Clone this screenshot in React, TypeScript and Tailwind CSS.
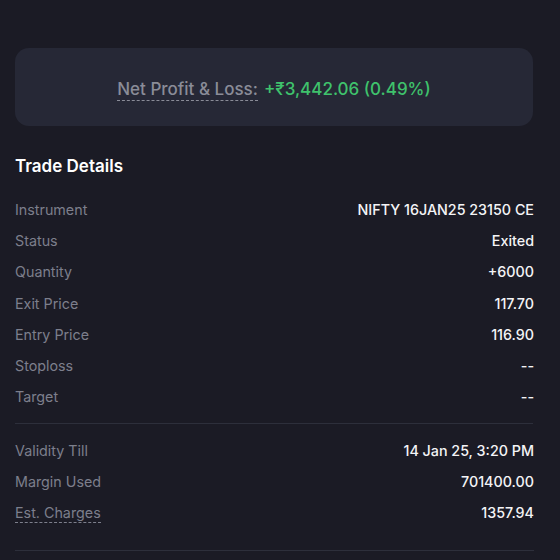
const rowsTop = [
  { label: "Instrument", value: "NIFTY 16JAN25 23150 CE" },
  { label: "Status", value: "Exited" },
  { label: "Quantity", value: "+6000" },
  { label: "Exit Price", value: "117.70" },
  { label: "Entry Price", value: "116.90" },
  { label: "Stoploss", value: "--" },
  { label: "Target", value: "--" },
];

const rowsBottom = [
  { label: "Validity Till", value: "14 Jan 25, 3:20 PM" },
  { label: "Margin Used", value: "701400.00" },
  { label: "Est. Charges", value: "1357.94", dashed: true },
];

type Row = { label: string; value: string; dashed?: boolean };

function DetailRow({ row }: { row: Row }) {
  return (
    <div className="flex items-center justify-between h-5 leading-5 text-[14.3px]">
      <span
        className={
          row.dashed
            ? "text-[#7d7f8c] border-b border-dashed border-[#7d7f8c] leading-[18px]"
            : "text-[#7d7f8c]"
        }
      >
        {row.label}
      </span>
      <span className="text-[#f4f4f6] font-medium">{row.value}</span>
    </div>
  );
}

export default function App() {
  return (
    <div
      className="min-h-[560px] w-[560px] bg-[#1b1b25] px-[15px] pt-[48px] overflow-hidden"
      style={{ fontFamily: "Inter, 'Noto Sans', sans-serif" }}
    >
      <div className="mr-[12px] h-[78px] pt-[4px] rounded-[14px] bg-[#262836] flex items-center justify-center gap-[6px] text-[17px] font-medium">
        <span className="text-[#8a8c98] border-b border-dashed border-[#8a8c98] leading-[22px]">
          Net Profit &amp; Loss:
        </span>
        <span className="text-[#3fc26c] leading-[22px]">+₹3,442.06 (0.49%)</span>
      </div>

      <h2 className="mt-[28px] text-[17px] leading-6 font-semibold text-white">
        Trade Details
      </h2>

      <div className="mt-[22px] flex flex-col gap-[11.2px] mr-[11px]">
        {rowsTop.map((r) => (
          <DetailRow key={r.label} row={r} />
        ))}
      </div>

      <div className="mt-[16px] mr-[12px] h-px bg-[#2d2f3b]" />

      <div className="mt-[17px] flex flex-col gap-[11px] mr-[11px]">
        {rowsBottom.map((r) => (
          <DetailRow key={r.label} row={r} />
        ))}
      </div>

      <div className="mt-[27px] mr-[11px] h-px bg-[#2d2f3b]" />
    </div>
  );
}
